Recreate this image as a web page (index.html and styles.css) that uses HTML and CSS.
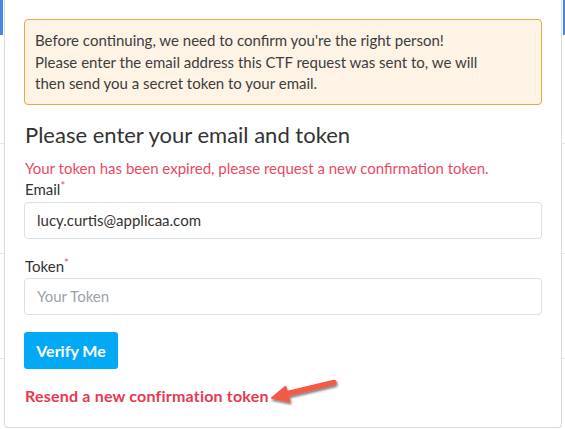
FILE: index.html
```html
<!DOCTYPE html>
<html>
<head>
<meta charset="utf-8">
<link rel="stylesheet" href="styles.css">
</head>
<body>
<div class="backdrop">
  <div class="edge left">
    <div class="tab"></div>
    <div class="rule r1"></div>
    <div class="rule r2"></div>
    <div class="rule r3"></div>
  </div>
  <div class="card">
    <div class="alert">
      Before continuing, we need to confirm you're the right person!<br>
      Please enter the email address this CTF request was sent to, we will<br>
      then send you a secret token to your email.
    </div>
    <h2 class="title">Please enter your email and token</h2>
    <p class="error">Your token has been expired, please request a new confirmation token.</p>
    <label class="label">Email<span class="req">*</span></label>
    <div class="input email-input">lucy.curtis@applicaa.com</div>
    <label class="label token-label">Token<span class="req">*</span></label>
    <div class="input token-input placeholder">Your Token</div>
    <button class="btn">Verify Me</button>
    <div class="resend-row">
      <a class="resend">Resend a new confirmation token</a>
      <svg class="arrow" width="72" height="30" viewBox="0 0 72 30">
        <defs>
          <filter id="sh" x="-20%" y="-40%" width="150%" height="200%">
            <feDropShadow dx="1" dy="2" stdDeviation="1.3" flood-color="#000" flood-opacity="0.5"/>
          </filter>
        </defs>
        <g filter="url(#sh)">
          <line x1="16" y1="16" x2="64" y2="4.5" stroke="#f25a47" stroke-width="5.5" stroke-linecap="round"/>
          <polygon points="2,20 15.5,8.8 19.6,23.4" fill="#f25a47" stroke="#f25a47" stroke-width="2" stroke-linejoin="round"/>
        </g>
      </svg>
    </div>
  </div>
  <div class="edge right">
    <div class="tab"></div>
    <div class="rule r1"></div>
    <div class="rule r2"></div>
    <div class="rule r3"></div>
  </div>
</div>
</body>
</html>
```
FILE: styles.css
```css
* { box-sizing: border-box; }
html, body { margin: 0; padding: 0; background: #fff; }
body { font-family: Lato, "Open Sans", sans-serif; color: #333; }
.backdrop { display: flex; width: 565px; height: 429px; overflow: hidden; }
.edge { position: relative; width: 4px; flex: none; background: #fff; }
.edge.right { width: 3px; }
.edge .tab { width: 3px; height: 35px; background: #4a86e8; }
.edge.right .tab { margin-left: 1px; width: 2px; }
.edge .rule { position: absolute; left: 0; right: 0; height: 1px; background: #e3e6ea; }
.r1 { top: 143px; } .r2 { top: 253px; } .r3 { top: 358px; }
.card {
  flex: 1; height: 428px;
  border: 1px solid #d3dde6; border-top: none;
  border-radius: 0 0 4px 4px;
  padding: 19px 19px 0 19px;
  background: #fff;
}
.alert {
  border: 1px solid #f4a24a; background: #fff3e6; border-radius: 4px;
  padding: 10px 10px 9px 10px;
  font-size: 15px; line-height: 21.5px; color: #3d3d3d;
}
.title { margin: 14px 0 0 1px; font-size: 22px; font-weight: 400; line-height: 32px; color: #333; }
.error { margin: 7px 0 0 1px; font-size: 15px; line-height: 21px; color: #ea4a63; }
.label { display: block; margin: 0 0 0 1px; font-size: 15px; line-height: 21px; color: #333; }
.req { color: #e8506a; font-size: 11px; vertical-align: top; line-height: 14px; }
.input {
  height: 37px; border: 1px solid #d5e0e8; border-radius: 4px;
  padding: 0 12px; font-size: 15px; line-height: 35px; color: #333;
}
.email-input { margin-top: 2px; }
.token-input { margin-top: 1px; }
.placeholder { color: #9aa3aa; }
.token-label { margin-top: 17px; }
.btn {
  display: block; margin-top: 17px; height: 37px; width: 94px;
  background: #03a9f4; border: none; border-radius: 3px; color: #fff;
  font-family: inherit; font-weight: 700; font-size: 16px; padding: 0;
}
.resend-row { display: flex; align-items: flex-start; margin-top: 17px; }
.resend { font-weight: 700; font-size: 16px; letter-spacing: 0.2px; color: #e8384f; line-height: 20px; margin-left: 1px; }
.arrow { margin-left: 1px; margin-top: -8px; }
```
